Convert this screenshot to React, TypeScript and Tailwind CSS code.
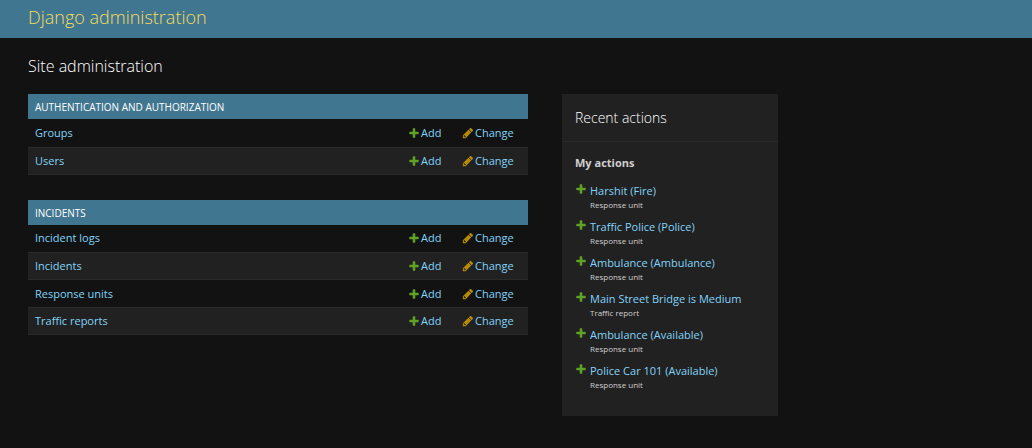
import React from "react";

const groups = [
  { caption: "Authentication and Authorization", models: ["Groups", "Users"] },
  {
    caption: "Incidents",
    models: ["Incident logs", "Incidents", "Response units", "Traffic reports"],
  },
];

const actions = [
  { title: "Harshit (Fire)", kind: "Response unit" },
  { title: "Traffic Police (Police)", kind: "Response unit" },
  { title: "Ambulance (Ambulance)", kind: "Response unit" },
  { title: "Main Street Bridge is Medium", kind: "Traffic report" },
  { title: "Ambulance (Available)", kind: "Response unit" },
  { title: "Police Car 101 (Available)", kind: "Response unit" },
];

function AddIcon() {
  return (
    <svg className="size-3 shrink-0 fill-[#5fa225]" viewBox="0 0 1792 1792" aria-hidden="true">
      <path d="M1600 796v192q0 40-28 68t-68 28h-416v416q0 40-28 68t-68 28h-192q-40 0-68-28t-28-68v-416h-416q-40 0-68-28t-28-68v-192q0-40 28-68t68-28h416v-416q0-40 28-68t68-28h192q40 0 68 28t28 68v416h416q40 0 68 28t28 68z" />
    </svg>
  );
}

function ChangeIcon() {
  return (
    <svg className="size-3 shrink-0 fill-[#b48c08]" viewBox="0 0 1792 1792" aria-hidden="true">
      <path d="M491 1536l91-91-235-235-91 91v107h128v128h107zM960 416l416 416-832 832h-416v-416zm683 96q0 53-37 90l-166 166-416-416 166-165q36-38 90-38 53 0 91 38l235 234q37 39 37 91z" />
    </svg>
  );
}

export default function App() {
  return (
    <div className="min-h-screen bg-[#121212] font-['Open_Sans','Noto_Sans',sans-serif] text-[11px] text-[#eeeeee]">
      <header className="flex h-[38px] items-center bg-[#417690] px-7 pb-1">
        <h1 className="text-[18px] leading-6 font-light text-[#f5dd5d]">
          <a href="#">Django administration</a>
        </h1>
      </header>
      <main className="px-7 pt-4 pb-8">
        <h2 className="mb-4 text-[16px] leading-6 font-light text-white">Site administration</h2>
        <div className="flex items-start gap-[34px]">
          <div className="flex max-w-[500px] flex-1 flex-col gap-[25px]">
            {groups.map((group) => (
              <table key={group.caption} className="w-full border-collapse">
                <caption className="h-[25px] bg-[#417690] px-[7px] text-left text-[10px] leading-[26px] text-white uppercase">
                  <a href="#">{group.caption}</a>
                </caption>
                <tbody>
                  {group.models.map((model) => (
                    <tr
                      key={model}
                      className="h-[28px] border-b border-[#2a2a2a] text-[#81d4fa] even:h-[27px] even:bg-[#212121]"
                    >
                      <th scope="row" className="p-0 pl-[7px] text-left leading-4 font-normal">
                        <a href="#">{model}</a>
                      </th>
                      <td className="w-[54px] p-0 leading-4">
                        <a href="#" className="flex items-center gap-px">
                          <AddIcon />
                          Add
                        </a>
                      </td>
                      <td className="w-[66px] p-0 leading-4">
                        <a href="#" className="flex items-center gap-px">
                          <ChangeIcon />
                          Change
                        </a>
                      </td>
                    </tr>
                  ))}
                </tbody>
              </table>
            ))}
          </div>
          <aside className="w-[216px] bg-[#212121] pb-[18px]">
            <h2 className="border-b border-[#2a2a2a] px-[13px] py-3 text-[14px] leading-[23px] font-light text-white">
              Recent actions
            </h2>
            <h3 className="px-[13px] pt-3 pb-[10px] text-[11px] leading-[18px] font-bold text-[#d0d0d0]">
              My actions
            </h3>
            <ul className="px-[13px]">
              {actions.map((action) => (
                <li key={action.title} className="flex h-9 gap-[3px]">
                  <span className="pt-px">
                    <AddIcon />
                  </span>
                  <div>
                    <a href="#" className="block leading-[18px] whitespace-nowrap text-[#81d4fa]">
                      {action.title}
                    </a>
                    <span className="block text-[8px] leading-[10px] text-[#d0d0d0]">{action.kind}</span>
                  </div>
                </li>
              ))}
            </ul>
          </aside>
        </div>
      </main>
    </div>
  );
}
